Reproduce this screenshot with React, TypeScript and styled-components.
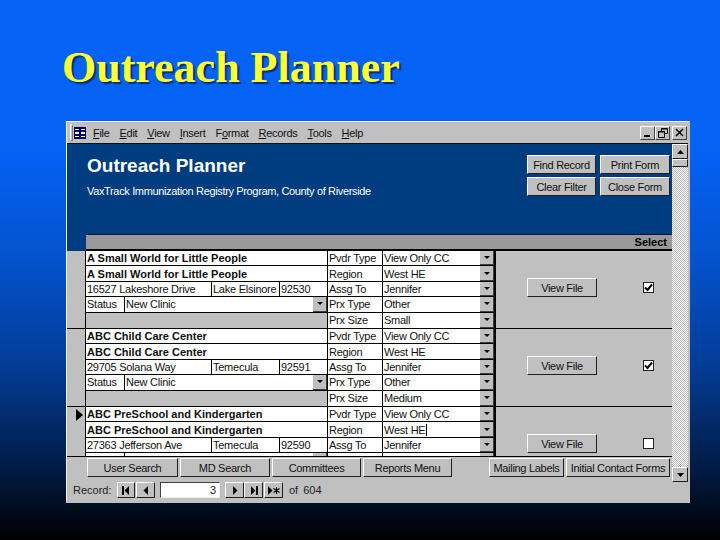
import React from "react";
import styled, { createGlobalStyle } from "styled-components";

const GlobalStyle = createGlobalStyle`
  html, body {
    margin: 0;
    padding: 0;
  }
`;

const Slide = styled.div`
  width: 720px;
  height: 540px;
  box-sizing: border-box;
  padding: 43px 0 0 62px;
  overflow: hidden;
  background: linear-gradient(180deg, #0462f4 0%, #0462f4 28%, #0450c8 50%, #033c94 68%, #01193f 88%, #000 100%);
  font-family: "Liberation Sans", Arial, sans-serif;
`;

const SlideTitle = styled.h1`
  margin: 0;
  height: 78px;
  font-family: "Liberation Serif", "Times New Roman", serif;
  font-size: 44px;
  line-height: 50px;
  font-weight: bold;
  white-space: nowrap;
  color: #ffff33;
  text-shadow: 2px 2px 1px #02307a;
`;

const Window = styled.div`
  width: 624px;
  height: 382px;
  margin-left: 4px;
  box-sizing: border-box;
  border-top: 1px solid #f4f4f4;
  border-left: 1px solid #f4f4f4;
  border-right: 2px solid #c0c0c0;
  border-bottom: 5px solid #c0c0c0;
  background: #c0c0c0;
  display: flex;
  flex-direction: column;
  color: #000;
  font-size: 11px;
`;

const MenuBar = styled.div`
  height: 22px;
  flex: none;
  box-sizing: border-box;
  display: flex;
  align-items: center;
  border-bottom: 1px solid #101010;
  padding-left: 3px;
`;

const Grip = styled.div`
  width: 1px;
  height: 15px;
  border: 1px solid #808080;
  border-top-color: #fff;
  border-left-color: #fff;
  margin-right: 1px;
`;

const MenuItem = styled.span<{ $left: number }>`
  margin-left: ${(p) => p.$left}px;
  font-size: 11px;
  letter-spacing: -0.3px;
  color: #111;
  u {
    text-decoration-thickness: 1px;
  }
`;

const WindowControls = styled.div`
  margin-left: auto;
  display: flex;
  padding-right: 1px;
`;

const ControlButton = styled.div<{ $gap?: number }>`
  width: 15px;
  height: 14px;
  margin-left: ${(p) => p.$gap ?? 0}px;
  box-sizing: border-box;
  background: #c0c0c0;
  border: 1px solid #404040;
  border-top-color: #fff;
  border-left-color: #fff;
  display: flex;
  align-items: center;
  justify-content: center;
`;

const Body = styled.div`
  flex: 1;
  min-height: 0;
  display: flex;
`;

const FormArea = styled.div`
  width: 605px;
  flex: none;
  display: flex;
  flex-direction: column;
`;

const FormHeader = styled.div`
  height: 107px;
  flex: none;
  box-sizing: border-box;
  background: #003c80;
  display: flex;
  flex-direction: column;
`;

const HeaderTop = styled.div`
  flex: 1;
  display: flex;
  justify-content: space-between;
  padding: 11px 2px 0 20px;
`;

const FormTitle = styled.div`
  font-size: 19px;
  line-height: 22px;
  font-weight: bold;
  color: #fff;
`;

const FormSubtitle = styled.div`
  margin-top: 7px;
  font-size: 11px;
  line-height: 14px;
  letter-spacing: -0.35px;
  color: #fff;
`;

const HeaderButtons = styled.div`
  display: grid;
  grid-template-columns: 69px 70px;
  grid-auto-rows: 19px;
  column-gap: 4px;
  row-gap: 3px;
`;

const Bevel = styled.button<{ $width?: number }>`
  width: ${(p) => (p.$width ? `${p.$width}px` : "auto")};
  height: 19px;
  padding: 0;
  flex: none;
  box-sizing: border-box;
  background: #c0c0c0;
  border: 1px solid #202020;
  border-top-color: #fff;
  border-left-color: #fff;
  font-family: inherit;
  font-size: 11px;
  letter-spacing: -0.3px;
  color: #111;
  white-space: nowrap;
`;

const SelectBar = styled.div`
  height: 17px;
  margin-left: 19px;
  box-sizing: border-box;
  border-top: 1px solid #101030;
  border-bottom: 2px solid #000;
  background: #999;
  text-align: right;
  padding-right: 5px;
  font-size: 11px;
  line-height: 14px;
  font-weight: bold;
`;

const Detail = styled.div`
  height: 206px;
  flex: none;
  overflow: hidden;
`;

const RecordRow = styled.div`
  height: 78px;
  box-sizing: border-box;
  display: flex;
  border-bottom: 1px solid #000;
`;

const RecordSelector = styled.div`
  width: 19px;
  flex: none;
  box-sizing: border-box;
  background: #c0c0c0;
  border-right: 1px solid #000;
  padding: 2px 0 0 9px;
`;

const Fields = styled.div`
  width: 242px;
  flex: none;
  box-sizing: border-box;
  display: grid;
  grid-template-rows: repeat(5, 1fr);
  background: #fff;
  border-right: 1px solid #000;
`;

const FieldRow = styled.div<{ $shaded?: boolean }>`
  display: flex;
  min-height: 0;
  border-bottom: 1px solid #000;
  background: ${(p) => (p.$shaded ? "#c0c0c0" : "#fff")};
  &:last-child {
    border-bottom: none;
  }
`;

const Cell = styled.div<{ $width?: number; $bold?: boolean }>`
  width: ${(p) => (p.$width ? `${p.$width}px` : "auto")};
  flex: ${(p) => (p.$width ? "none" : "1")};
  box-sizing: border-box;
  padding-left: 1px;
  font-size: 11px;
  font-weight: ${(p) => (p.$bold ? "bold" : "normal")};
  letter-spacing: ${(p) => (p.$bold ? "0" : "-0.25px")};
  line-height: 14px;
  white-space: nowrap;
  overflow: hidden;
  display: flex;
  align-items: center;
  border-right: 1px solid #000;
  color: #111;
  &:last-child {
    border-right: none;
  }
`;

const Labels = styled.div`
  width: 55px;
  flex: none;
  box-sizing: border-box;
  display: grid;
  grid-template-rows: repeat(5, 1fr);
  background: #fff;
  border-right: 1px solid #000;
`;

const Combos = styled.div`
  width: 113px;
  flex: none;
  box-sizing: border-box;
  display: grid;
  grid-template-rows: repeat(5, 1fr);
  background: #fff;
  border-right: 2px solid #000;
`;

const DropButton = styled.div`
  width: 14px;
  flex: none;
  align-self: stretch;
  margin-left: auto;
  box-sizing: border-box;
  background: #c0c0c0;
  border-right: 1px solid #404040;
  border-bottom: 1px solid #404040;
  display: flex;
  align-items: center;
  justify-content: center;
  &::after {
    content: "";
    border-left: 3px solid transparent;
    border-right: 3px solid transparent;
    border-top: 3px solid #000;
  }
`;

const Caret = styled.span`
  display: inline-block;
  width: 1px;
  height: 12px;
  margin-left: 1px;
  background: #000;
`;

const ActionPanel = styled.div`
  flex: 1;
  display: flex;
  align-items: flex-start;
  padding: 27px 0 0 31px;
  background: #c0c0c0;
`;

const CheckBox = styled.div`
  width: 11px;
  height: 11px;
  margin: 4px 0 0 46px;
  box-sizing: border-box;
  background: #fff;
  border: 1px solid #222;
  display: flex;
  align-items: center;
  justify-content: center;
`;

const FormFooter = styled.div`
  flex: 1;
  display: flex;
  align-items: flex-start;
  box-sizing: border-box;
  padding: 1px 2px 0 20px;
  gap: 2px;
  border-top: 1px solid #000;
  margin-top: -1px;
`;

const FooterSpacer = styled.div`
  width: 33px;
  flex: none;
`;

const ScrollBar = styled.div`
  width: 16px;
  flex: none;
  display: flex;
  flex-direction: column;
  background-image: repeating-conic-gradient(#fff 0% 25%, #b4b4b4 0% 50%);
  background-size: 2px 2px;
`;

const ScrollButton = styled.div<{ $thumb?: boolean }>`
  height: ${(p) => (p.$thumb ? 8 : 15)}px;
  flex: none;
  box-sizing: border-box;
  background: #c0c0c0;
  border: 1px solid #202020;
  border-top-color: #fff;
  border-left-color: #fff;
  display: flex;
  align-items: center;
  justify-content: center;
  &:last-child {
    margin-top: auto;
  }
`;

const NavBar = styled.div`
  height: 16px;
  flex: none;
  display: flex;
  align-items: center;
  padding-left: 6px;
  box-sizing: border-box;
  color: #222;
  font-size: 11px;
`;

const NavLabel = styled.span`
  width: 44px;
  flex: none;
`;

const NavButton = styled.div<{ $width: number; $gap?: number }>`
  width: ${(p) => p.$width}px;
  height: 16px;
  margin-left: ${(p) => p.$gap ?? 0}px;
  flex: none;
  box-sizing: border-box;
  background: #c0c0c0;
  border: 1px solid #202020;
  border-top-color: #fff;
  border-left-color: #fff;
  display: flex;
  align-items: center;
  justify-content: center;
`;

const NavInput = styled.div`
  width: 60px;
  height: 16px;
  margin-left: 5px;
  flex: none;
  box-sizing: border-box;
  background: #fff;
  border: 1px solid #404040;
  border-right-color: #eee;
  border-bottom-color: #eee;
  text-align: right;
  padding-right: 3px;
  line-height: 14px;
`;

const NavTotal = styled.span`
  margin-left: 6px;
  word-spacing: 2px;
`;

const Arrow = ({ up }: { up?: boolean }) => (
  <svg width="7" height="4" viewBox="0 0 7 4">
    <path d={up ? "M3.5 0 L7 4 H0 Z" : "M0 0 H7 L3.5 4 Z"} fill="#000" />
  </svg>
);

const FormIcon = () => (
  <svg width="12" height="12" viewBox="0 0 12 12">
    <rect width="12" height="12" fill="#000060" />
    <path d="M1 2h4v1H1zM7 2h4v1H7zM1 5h4v2H1zM7 5h4v2H7zM1 9h4v1H1zM7 9h4v1H7z" fill="#fff" />
  </svg>
);

const NavIcon = ({ type }: { type: "first" | "prev" | "next" | "last" | "new" }) => (
  <svg width="12" height="9" viewBox="0 0 12 9">
    {type === "first" && <path d="M2 0h2v9H2zM9 0v9L4.5 4.5z" fill="#000" />}
    {type === "prev" && <path d="M8 0v9L3.5 4.5z" fill="#000" />}
    {type === "next" && <path d="M4 0v9l4.5-4.5z" fill="#000" />}
    {type === "last" && <path d="M3 0v9l4.5-4.5zM8 0h2v9H8z" fill="#000" />}
    {type === "new" && (
      <>
        <path d="M0 0v9l4.5-4.5z" fill="#000" />
        <path d="M8.5 1v7M5.5 2.5l6 4M11.5 2.5l-6 4" stroke="#000" strokeWidth="1.1" />
      </>
    )}
  </svg>
);

type OutreachRecord = {
  name: string;
  address: string;
  city: string;
  zip: string;
  size: string;
  checked: boolean;
  current?: boolean;
};

const records: OutreachRecord[] = [
  { name: "A Small World for Little People", address: "16527 Lakeshore Drive", city: "Lake Elsinore", zip: "92530", size: "Small", checked: true },
  { name: "ABC Child Care Center", address: "29705 Solana Way", city: "Temecula", zip: "92591", size: "Medium", checked: true },
  { name: "ABC PreSchool and Kindergarten", address: "27363 Jefferson Ave", city: "Temecula", zip: "92590", size: "Small", checked: false, current: true },
];

const menus: [string, string, string, number][] = [
  ["", "F", "ile", 7],
  ["", "E", "dit", 10],
  ["", "V", "iew", 10],
  ["", "I", "nsert", 10],
  ["F", "o", "rmat", 10],
  ["", "R", "ecords", 10],
  ["", "T", "ools", 10],
  ["", "H", "elp", 10],
];

const OutreachRow = ({ record }: { record: OutreachRecord }) => {
  const labels = ["Pvdr Type", "Region", "Assg To", "Prx Type", "Prx Size"];
  const values = ["View Only CC", "West HE", "Jennifer", "Other", record.size];
  return (
    <RecordRow>
      <RecordSelector>
        {record.current && (
          <svg width="8" height="12" viewBox="0 0 8 12">
            <path d="M0 0 L7 6 L0 12 Z" fill="#000" />
          </svg>
        )}
      </RecordSelector>
      <Fields>
        <FieldRow>
          <Cell $bold>{record.name}</Cell>
        </FieldRow>
        <FieldRow>
          <Cell $bold>{record.name}</Cell>
        </FieldRow>
        <FieldRow>
          <Cell $width={126}>{record.address}</Cell>
          <Cell $width={68}>{record.city}</Cell>
          <Cell>{record.zip}</Cell>
        </FieldRow>
        <FieldRow>
          <Cell $width={39}>Status</Cell>
          <Cell>
            New Clinic
            <DropButton />
          </Cell>
        </FieldRow>
        <FieldRow $shaded />
      </Fields>
      <Labels>
        {labels.map((label) => (
          <FieldRow key={label}>
            <Cell>{label}</Cell>
          </FieldRow>
        ))}
      </Labels>
      <Combos>
        {values.map((value, i) => (
          <FieldRow key={i}>
            <Cell>
              {value}
              {record.current && i === 1 && <Caret />}
              <DropButton />
            </Cell>
          </FieldRow>
        ))}
      </Combos>
      <ActionPanel>
        <Bevel $width={70}>View File</Bevel>
        <CheckBox>
          {record.checked && (
            <svg width="9" height="9" viewBox="0 0 9 9">
              <path d="M1 4.5 L3.5 7 L8 1.5" fill="none" stroke="#000" strokeWidth="2" />
            </svg>
          )}
        </CheckBox>
      </ActionPanel>
    </RecordRow>
  );
};

export default function App() {
  return (
    <Slide>
      <GlobalStyle />
      <SlideTitle>Outreach Planner</SlideTitle>
      <Window>
        <MenuBar>
          <Grip />
          <FormIcon />
          {menus.map(([before, key, after, left]) => (
            <MenuItem key={key + after} $left={left}>
              {before}
              <u>{key}</u>
              {after}
            </MenuItem>
          ))}
          <WindowControls>
            <ControlButton>
              <svg width="9" height="9" viewBox="0 0 9 9">
                <path d="M1 7h6v2H1z" fill="#000" />
              </svg>
            </ControlButton>
            <ControlButton>
              <svg width="10" height="10" viewBox="0 0 10 10">
                <path d="M3.5 3V.5h6v5H7M.5 3.5h6v6h-6z" fill="none" stroke="#000" />
                <path d="M3 1h7M0 4h7" stroke="#000" />
              </svg>
            </ControlButton>
            <ControlButton $gap={2}>
              <svg width="9" height="9" viewBox="0 0 9 9">
                <path d="M1 1l7 7M8 1l-7 7" stroke="#000" strokeWidth="1.6" />
              </svg>
            </ControlButton>
          </WindowControls>
        </MenuBar>
        <Body>
          <FormArea>
            <FormHeader>
              <HeaderTop>
                <div>
                  <FormTitle>Outreach Planner</FormTitle>
                  <FormSubtitle>VaxTrack Immunization Registry Program, County of Riverside</FormSubtitle>
                </div>
                <HeaderButtons>
                  <Bevel>Find Record</Bevel>
                  <Bevel>Print Form</Bevel>
                  <Bevel>Clear Filter</Bevel>
                  <Bevel>Close Form</Bevel>
                </HeaderButtons>
              </HeaderTop>
              <SelectBar>Select</SelectBar>
            </FormHeader>
            <Detail>
              {records.map((record) => (
                <OutreachRow key={record.name} record={record} />
              ))}
            </Detail>
            <FormFooter>
              <Bevel $width={91}>User Search</Bevel>
              <Bevel $width={90}>MD Search</Bevel>
              <Bevel $width={89}>Committees</Bevel>
              <Bevel $width={89}>Reports Menu</Bevel>
              <FooterSpacer />
              <Bevel $width={75}>Mailing Labels</Bevel>
              <Bevel $width={104}>Initial Contact Forms</Bevel>
            </FormFooter>
          </FormArea>
          <ScrollBar>
            <ScrollButton>
              <Arrow up />
            </ScrollButton>
            <ScrollButton $thumb />
            <ScrollButton>
              <Arrow />
            </ScrollButton>
          </ScrollBar>
        </Body>
        <NavBar>
          <NavLabel>Record:</NavLabel>
          <NavButton $width={18}>
            <NavIcon type="first" />
          </NavButton>
          <NavButton $width={19} $gap={1}>
            <NavIcon type="prev" />
          </NavButton>
          <NavInput>3</NavInput>
          <NavButton $width={19} $gap={5}>
            <NavIcon type="next" />
          </NavButton>
          <NavButton $width={19}>
            <NavIcon type="last" />
          </NavButton>
          <NavButton $width={19} $gap={1}>
            <NavIcon type="new" />
          </NavButton>
          <NavTotal>of 604</NavTotal>
        </NavBar>
      </Window>
    </Slide>
  );
}
